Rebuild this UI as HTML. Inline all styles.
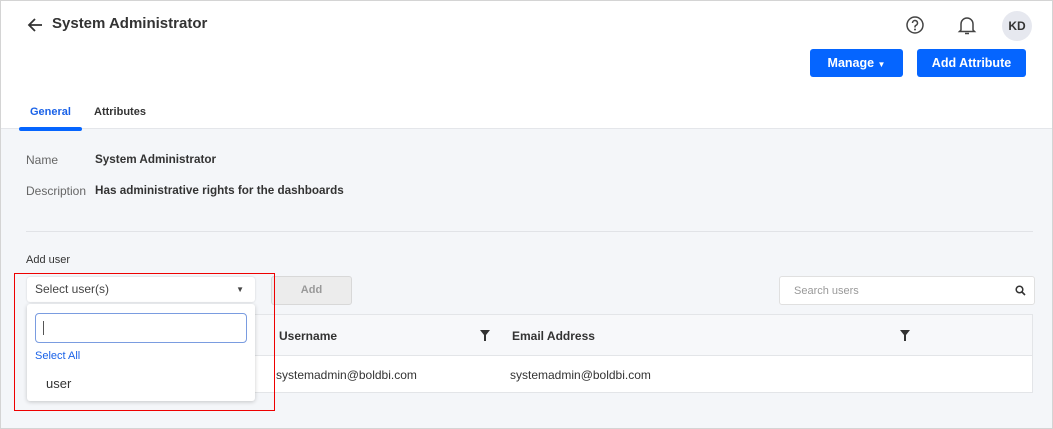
<!DOCTYPE html>
<html><head><style>
*{box-sizing:border-box;margin:0;padding:0}
body{width:1053px;height:429px;overflow:hidden;font-family:"Liberation Sans",sans-serif;background:#f4f6f9;position:relative;color:#333}
.frame{position:absolute;left:0;top:0;width:1053px;height:429px;border:1px solid #d4d4d4;pointer-events:none;z-index:10}
.hdr{position:absolute;left:0;top:0;width:1053px;height:129px;background:#fff;border-bottom:1px solid #e4e6ea}
.abs{position:absolute}
.btn{position:absolute;background:#0565ff;color:#fff;font-weight:bold;font-size:12.5px;border-radius:3px;text-align:center;line-height:28px;height:28px}
.lbl{font-size:12px;color:#666}
.val{font-size:11.7px;font-weight:bold;color:#333}
</style></head><body>
<div class="hdr">
<svg class="abs" style="left:26px;top:16px" width="18" height="18" viewBox="0 0 18 18"><path d="M16 9H3M9 3L3 9l6 6" stroke="#333" stroke-width="1.8" fill="none"/></svg>
<div class="abs" style="left:52px;top:15px;font-size:15px;font-weight:bold;color:#333">System Administrator</div>
<svg class="abs" style="left:905px;top:15px" width="20" height="20" viewBox="0 0 20 20"><circle cx="10" cy="10" r="8" stroke="#444" stroke-width="1.5" fill="none"/><path d="M7.5 8a2.5 2.5 0 1 1 3.5 2.3c-.7.3-1 .8-1 1.5v.7" stroke="#444" stroke-width="1.5" fill="none"/><circle cx="10" cy="14.5" r="1" fill="#444"/></svg>
<svg class="abs" style="left:957px;top:14px" width="20" height="22" viewBox="0 0 20 22"><path d="M4 16V10a6 6 0 0 1 12 0v6l1.5 1.5h-15z" stroke="#444" stroke-width="1.5" fill="none"/><path d="M8 19.5h4" stroke="#444" stroke-width="1.5"/></svg>
<div class="abs" style="left:1002px;top:11px;width:30px;height:30px;border-radius:50%;background:#e6e8ef;font-size:12px;font-weight:bold;text-align:center;line-height:30px;color:#333">KD</div>
<div class="btn" style="left:810px;top:49px;width:93px">Manage <span style="font-size:8px">▼</span></div>
<div class="btn" style="left:917px;top:49px;width:109px">Add Attribute</div>
<div class="abs" style="left:30px;top:106px;font-size:11px;font-weight:bold;color:#1a62e8">General</div>
<div class="abs" style="left:19px;top:127px;width:63px;height:4px;border-radius:2px;background:#0565ff"></div>
<div class="abs" style="left:94px;top:106px;font-size:11px;font-weight:bold;color:#333">Attributes</div>
</div>
<div class="abs lbl" style="left:26px;top:153px">Name</div>
<div class="abs val" style="left:95px;top:153px">System Administrator</div>
<div class="abs lbl" style="left:26px;top:184px">Description</div>
<div class="abs val" style="left:95px;top:184px">Has administrative rights for the dashboards</div>
<div class="abs" style="left:26px;top:231px;width:1007px;height:1px;background:#e1e3e7"></div>
<div class="abs" style="left:26px;top:254px;font-size:11px;color:#333">Add user</div>
<div class="abs" style="left:271px;top:276px;width:81px;height:29px;background:#ececec;border:1px solid #d8d8d8;border-radius:3px;font-size:11px;font-weight:bold;color:#999;text-align:center;line-height:27px">Add</div>
<div class="abs" style="left:779px;top:276px;width:256px;height:29px;background:#fff;border:1px solid #e0e0e0;border-radius:3px;font-size:11px;color:#999;padding-left:14px;line-height:28px">Search users
<svg class="abs" style="right:8px;top:8px" width="11" height="11" viewBox="0 0 11 11"><circle cx="4.5" cy="4.5" r="3.3" stroke="#333" stroke-width="1.5" fill="none"/><path d="M7 7l3 3" stroke="#333" stroke-width="1.6"/></svg></div>
<div class="abs" style="left:27px;top:314px;width:1006px;height:79px;background:#fff;border:1px solid #e3e5e8">
<div style="position:absolute;left:0;top:0;width:100%;height:41px;background:#f7f8fa;border-bottom:1px solid #e3e5e8"></div>
<div class="abs" style="left:251px;top:14px;font-size:12px;font-weight:bold">Username</div>
<div class="abs" style="left:484px;top:14px;font-size:12px;font-weight:bold">Email Address</div>
<svg class="abs" style="left:452px;top:15px" width="10" height="11" viewBox="0 0 10 11"><path d="M0 0h10L6 5v6H4V5z" fill="#333"/></svg>
<svg class="abs" style="left:872px;top:15px" width="10" height="11" viewBox="0 0 10 11"><path d="M0 0h10L6 5v6H4V5z" fill="#333"/></svg>
<div class="abs" style="left:248px;top:53px;font-size:12px">systemadmin@boldbi.com</div>
<div class="abs" style="left:482px;top:53px;font-size:12px">systemadmin@boldbi.com</div>
</div>
<div class="abs" style="left:27px;top:277px;width:228px;height:25px;background:#fff;border-radius:3px;box-shadow:0 0 2px rgba(0,0,0,.15);font-size:12px;color:#444;padding-left:8px;line-height:25px">Select user(s)<span class="abs" style="right:11px;top:0;font-size:8px">▼</span></div>
<div class="abs" style="left:27px;top:304px;width:228px;height:97px;background:#fff;border-radius:3px;box-shadow:0 1px 4px rgba(0,0,0,.2)">
<div class="abs" style="left:8px;top:9px;width:212px;height:30px;border:1.5px solid #7a9ce0;border-radius:4px"><div class="abs" style="left:7px;top:7px;width:1px;height:14px;background:#555"></div></div>
<div class="abs" style="left:8px;top:46px;font-size:11px;color:#1a62e8">Select All</div>
<div class="abs" style="left:19px;top:72px;font-size:13px;color:#333">user</div>
</div>
<div class="abs" style="left:14px;top:273px;width:261px;height:138px;border:1.5px solid #e00"></div>
<div class="frame"></div>
</body></html>
